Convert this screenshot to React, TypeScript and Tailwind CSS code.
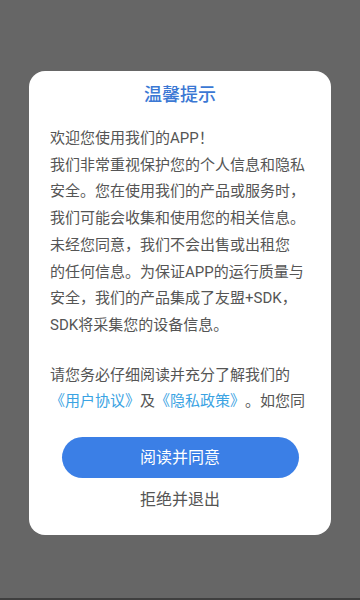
import React from "react";

const lines1 = [
  "欢迎您使用我们的APP！",
  "我们非常重视保护您的个人信息和隐私",
  "安全。您在使用我们的产品或服务时，",
  "我们可能会收集和使用您的相关信息。",
  "未经您同意，我们不会出售或出租您",
  "的任何信息。为保证APP的运行质量与",
  "安全，我们的产品集成了友盟+SDK，",
  "SDK将采集您的设备信息。",
];

export default function App() {
  return (
    <div
      className="w-[360px] h-[600px] flex flex-col bg-[#666666] overflow-hidden"
      style={{ fontFamily: "Roboto, 'Noto Sans CJK SC', sans-serif" }}
    >
      <div className="flex-1 flex flex-col items-center">
        <div className="mt-[71px] w-[302px] bg-white rounded-[16px] flex flex-col items-center pt-[12px] pb-[24px]">
          <div className="h-[24px] leading-[24px] text-[18px] text-[#3b78d4] font-medium">温馨提示</div>
          <div className="mt-[18px] w-full px-[21px] h-[293px] overflow-hidden text-[15px] leading-[26.7px] text-[#555555] [text-spacing-trim:space-all]">
            <div>
              {lines1.map((l, i) => (
                <div key={i} className="whitespace-nowrap">{l}</div>
              ))}
            </div>
            <div className="mt-[23px]">
              <div className="whitespace-nowrap">请您务必仔细阅读并充分了解我们的</div>
              <div className="whitespace-nowrap">
                <span className="text-[#3aa3e3]">《用户协议》</span>及<span className="text-[#3aa3e3]">《隐私政策》</span>。如您同
              </div>
            </div>
          </div>
          <button className="mt-[19px] w-[237px] h-[41px] rounded-full bg-[#3b7fe6] text-white text-[16px] leading-[41px]">
            阅读并同意
          </button>
          <div className="mt-[11px] h-[22px] leading-[22px] text-[16px] text-[#555555]">拒绝并退出</div>
        </div>
      </div>
      <div className="h-[2px] bg-[#3f3f3f]" />
    </div>
  );
}
